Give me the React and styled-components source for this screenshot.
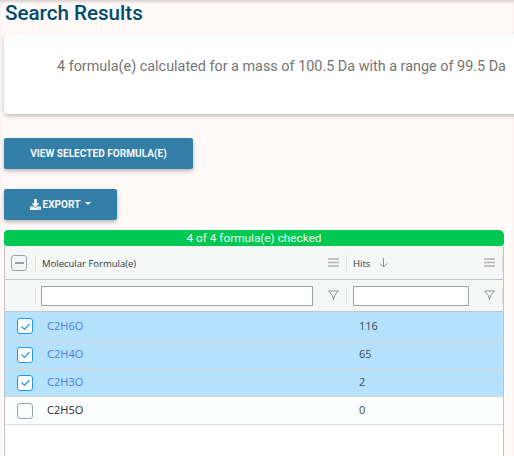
import React from "react";
import styled, { createGlobalStyle } from "styled-components";
import { FaDownload } from "react-icons/fa";

const Global = createGlobalStyle`
  html, body { margin: 0; padding: 0; height: 456px; overflow: hidden; background: #fff9f8; }
  #root { height: 456px; overflow: hidden; }
  * { box-sizing: border-box; }
`;

const Page = styled.div`
  position: relative;
  width: 514px;
  height: 456px;
  padding: 0 0 0 4px;
  overflow: hidden;
  font-family: Roboto, sans-serif;
  box-shadow: inset 0 3px 3px -1px rgba(0, 0, 0, 0.16);
`;
const Title = styled.h1`
  margin: 0;
  padding: 0 0 0 1px;
  height: 34px;
  font-size: 20.6px;
  line-height: 27px;
  font-weight: 500;
  color: #004b6e;
`;
const Card = styled.div`
  width: 530px;
  height: 80px;
  padding: 22px 0 0 53px;
  background: #fff;
  border-radius: 4px;
  box-shadow: 0 2px 4px rgba(0, 0, 0, 0.25);
  color: #757575;
  font-size: 14.4px;
  line-height: 22px;
  white-space: nowrap;
`;
const Button = styled.button`
  display: flex;
  align-items: center;
  justify-content: center;
  width: ${(p) => p.$width}px;
  height: 31px;
  margin-top: ${(p) => p.$top}px;
  padding: 0;
  border: 0;
  border-radius: 2px;
  background: #337ea6;
  color: #f4f8fa;
  font-family: Roboto, sans-serif;
  font-size: 10.1px;
  font-weight: 700;
  white-space: nowrap;
  box-shadow: 0 2px 4px rgba(0, 0, 0, 0.28);
`;
const Caret = styled.span`
  width: 0;
  height: 0;
  margin-left: 5px;
  border-left: 3px solid transparent;
  border-right: 3px solid transparent;
  border-top: 3px solid #f4f8fa;
  margin-top: -2px;
`;
const DownloadIcon = styled(FaDownload)`
  width: 11px;
  height: 11px;
  margin-right: 2px;
`;
const Status = styled.div`
  width: 500px;
  height: 16px;
  margin-top: 10px;
  background: #00c853;
  color: #e9fbef;
  font-size: 11.8px;
  line-height: 16px;
  text-align: center;
  border-radius: 4px 5px 3px 3px;
`;
const Grid = styled.div`
  width: 500px;
  height: 220px;
  background: #fff;
  border: solid #bdc3c7;
  border-width: 0 1px;
  font-family: "Open Sans", sans-serif;
  color: #222;
`;
const Row = styled.div`
  display: grid;
  grid-template-columns: 30px 311px 1fr;
  align-items: center;
  height: ${(p) => p.$h}px;
  background: ${(p) => p.$bg};
  border-bottom: 1px solid ${(p) => p.$line};
`;
const HeadCell = styled.div`
  display: flex;
  align-items: center;
  height: 16px;
  padding: 0 7px 0 6px;
  border-left: 1px solid #dde0e1;
  border-right: ${(p) => (p.$last ? "1px solid #dde0e1" : "0")};
  font-size: 9.5px;
  color: #2b3a44;
  min-width: 0;
`;
const HeadLabel = styled.span`
  padding-top: 2px;
`;
const Spacer = styled.span`
  flex: 1;
`;
const SelectBox = styled.span`
  display: flex;
  align-items: center;
  justify-content: center;
  width: 16px;
  height: 16px;
  margin-left: ${(p) => p.$left}px;
  background: ${(p) => (p.$checked ? "#fff" : "transparent")};
  border: 1.5px solid ${(p) => p.$color};
  border-radius: 3px;
`;
const Dash = styled.span`
  width: 9px;
  height: 2px;
  background: #9aa0a4;
`;
const FilterInput = styled.input`
  display: block;
  flex: 1;
  min-width: 0;
  height: 20px;
  padding: 0 4px;
  border: 1px solid #95a5a6;
  border-radius: 0;
  background: #fff;
  outline: none;
`;
const FilterCell = styled(HeadCell)`
  padding: 0 7px 0 ${(p) => (p.$last ? 6 : 5)}px;
  gap: 15px;
`;
const CheckCell = styled.div`
  padding-left: 12px;
`;
const Formula = styled.div`
  padding: 0 0 2px 12px;
  font-size: 11.1px;
  color: ${(p) => (p.$link ? "#4a7de0" : "#2a2a2a")};
`;
const Hits = styled.div`
  padding: 0 0 2px 13px;
  font-size: 11px;
  color: #3a4750;
`;
const SortIcon = styled.svg`
  margin-left: 9px;
`;
const Bars = () => (
  <svg width="11" height="9" viewBox="0 0 11 9">
    <path d="M0 1h11M0 4.5h11M0 8h11" stroke="#b3b3ad" strokeWidth="1.6" />
  </svg>
);
const Funnel = () => (
  <svg width="11" height="11" viewBox="0 0 11 11" fill="none">
    <path d="M.6 1h9.8L6.6 5.5 5.5 9.8 4.4 5.5z" stroke="#8a9499" strokeWidth="1" strokeLinejoin="round" />
  </svg>
);
const SortArrow = () => (
  <SortIcon width="9" height="10" viewBox="0 0 9 10" fill="none">
    <path d="M4.5 0v9M1 5.5l3.5 3.5L8 5.5" stroke="#7f8ca6" strokeWidth="1" />
  </SortIcon>
);
const Tick = () => (
  <svg width="11" height="9" viewBox="0 0 11 9" fill="none">
    <path d="M1.5 4.5l3 3 5-5.5" stroke="#2196f3" strokeWidth="1.2" />
  </svg>
);

const rows = [
  { f: "C2H6O", h: 116, on: true, rowH: 29 },
  { f: "C2H4O", h: 65, on: true, rowH: 28 },
  { f: "C2H3O", h: 2, on: true, rowH: 28 },
  { f: "C2H5O", h: 0, on: false, rowH: 28 },
];

export default function App() {
  return (
    <Page>
      <Global />
      <Title>Search Results</Title>
      <Card>4 formula(e) calculated for a mass of 100.5 Da with a range of 99.5 Da</Card>
      <Button $width={189} $top={24}>VIEW SELECTED FORMULA(E)</Button>
      <Button $width={113} $top={20}>
        <DownloadIcon />
        EXPORT
        <Caret />
      </Button>
      <Status>4 of 4 formula(e) checked</Status>
      <Grid>
        <Row $h={34} $bg="#f5f7f7" $line="#bdc3c7">
          <SelectBox $left={6} $color="#9aa5ab"><Dash /></SelectBox>
          <HeadCell>
            <HeadLabel>Molecular Formula(e)</HeadLabel>
            <Spacer />
            <Bars />
          </HeadCell>
          <HeadCell $last>
            <HeadLabel>Hits</HeadLabel>
            <SortArrow />
            <Spacer />
            <Bars />
          </HeadCell>
        </Row>
        <Row $h={32} $bg="#f5f7f7" $line="#bdc3c7">
          <span />
          <FilterCell>
            <FilterInput />
            <Funnel />
          </FilterCell>
          <FilterCell $last>
            <FilterInput />
            <Funnel />
          </FilterCell>
        </Row>
        {rows.map((r) => (
          <Row key={r.f} $h={r.rowH} $bg={r.on ? "#b5e3ff" : "#fcfdfe"} $line={r.on ? "#d9d5d5" : "#d9dcde"}>
            <CheckCell>
              <SelectBox $left={0} $checked={r.on} $color={r.on ? "#2196f3" : "#95a5a6"}>
                {r.on && <Tick />}
              </SelectBox>
            </CheckCell>
            <Formula $link={r.on}>{r.f}</Formula>
            <Hits>{r.h}</Hits>
          </Row>
        ))}
      </Grid>
    </Page>
  );
}
